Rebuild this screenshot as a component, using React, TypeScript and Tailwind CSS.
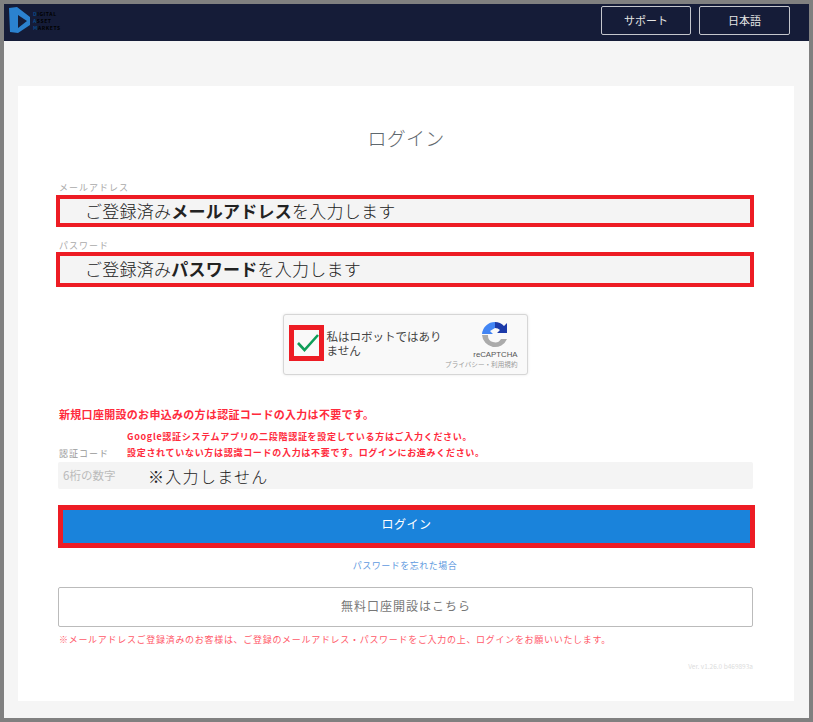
import type { ReactNode } from "react";

const jp = { fontFamily: '"Noto Sans CJK JP", "Noto Sans", sans-serif' };

function Logo() {
  return (
    <div className="flex items-center gap-[2px]">
      <svg width="22" height="27" viewBox="0 0 22 27">
        <path d="M0 1 L8 0 L21 10 L21 18 L9 26 L1 25 Z M9 8 L9 21 L18 14 Z" fill="#2b82d0" fillRule="evenodd" />
      </svg>
      <div className="flex flex-col text-[5px] font-bold leading-[7px] tracking-[0.6px] text-black">
        <span><span className="text-[#0a4a8a]">D</span>IGITAL</span>
        <span><span className="text-[#0a4a8a]">A</span>SSET</span>
        <span><span className="text-[#0a4a8a]">M</span>ARKETS</span>
      </div>
    </div>
  );
}

function Bar({ children }: { children: ReactNode }) {
  return (
    <div className="flex w-full items-center border-[4px] border-[#ed1c24] bg-[#f4f4f4] pb-[1px] pl-[25px] text-[17px] font-light tracking-[0.25px] text-[#222]">
      {children}
    </div>
  );
}

export default function App() {
  return (
    <div style={jp} className="flex h-[722px] w-[813px] flex-col border-4 border-[#808080] bg-[#f5f5f5]">
      <header className="flex h-[37px] shrink-0 items-start justify-between bg-[#151c38] pl-[5px] pr-[19px] pt-[3px]">
        <Logo />
        <div className="-mt-[1px] flex gap-2">
          <div className="flex h-[29px] w-[90px] items-center justify-center rounded-[2px] border border-[#c4c6cc] text-[11px] text-[#e4e4e4]">サポート</div>
          <div className="flex h-[29px] w-[91px] items-center justify-center rounded-[2px] border border-[#c4c6cc] text-[11px] text-[#e4e4e4]">日本語</div>
        </div>
      </header>
      <main className="ml-[14px] mr-[15px] mt-[45px] flex h-[615px] flex-col bg-white pl-[38px] pr-[40px]">
        <h1 className="mt-[37px] pl-[2px] text-center text-[19px] font-light leading-[30px] tracking-[0.2px] text-[#5f686e]">ログイン</h1>
        <div className="mt-[28px] pl-[3px] text-[9px] leading-[13px] tracking-[1px] text-[#aaa]">メールアドレス</div>
        <div className="mt-[1px] flex h-[32px]">
          <Bar><span>ご登録済み<b className="font-bold">メールアドレス</b>を入力します</span></Bar>
        </div>
        <div className="mt-[12px] pl-[3px] text-[9px] leading-[13px] tracking-[1px] text-[#aaa]">パスワード</div>
        <div className="flex h-[35px]">
          <Bar><span>ご登録済み<b className="font-bold">パスワード</b>を入力します</span></Bar>
        </div>

        <div className="mt-[27px] flex justify-center">
          <div className="flex h-[61px] w-[245px] rounded-[3px] border border-[#d6d6d6] bg-[#f9f9f9] shadow-[0_0_3px_rgba(0,0,0,0.1)]">
            <div className="ml-[5px] mt-[10px] flex h-[36px] w-[35px] shrink-0 items-center justify-center border-[5px] border-[#ed1c24] bg-[#f9f9f9] pl-[3px]">
              <svg width="22" height="18" viewBox="0 0 22 18" className="shrink-0">
                <path d="M1 9 L7.5 16 L21 1" fill="none" stroke="#0f9d58" strokeWidth="2.6" />
              </svg>
            </div>
            <div className="ml-[3px] mt-[14px] w-[116px] shrink-0 text-[11.5px] leading-[14px] text-[#444]">私はロボットではありません</div>
            <div className="flex flex-1 flex-col items-end pr-[9px]">
              <svg width="26" height="26" viewBox="0 0 26 26" className="mr-[10px] mt-[7px]">
                <path d="M13 0 A13 13 0 0 1 22 4 L25 1 L25 11 L15 11 L18 8 A7 7 0 0 0 13 6 Z" fill="#1c3aa9" />
                <path d="M0 12 A13 13 0 0 1 13 0 L13 6 L8 9 L11 12 Z" fill="#4285f4" />
                <path d="M0 13 L6 13 A7 7 0 0 0 19 17 L25 17 A13 13 0 0 1 0 13 Z" fill="#ababab" />
              </svg>
              <div className="mt-[2px] text-[7.8px] leading-[10px] text-[#555]" style={{ fontFamily: '"Liberation Sans", sans-serif' }}>reCAPTCHA</div>
              <div className="whitespace-nowrap text-[6.6px] leading-[9px] text-[#999]">プライバシー・利用規約</div>
            </div>
          </div>
        </div>

        <p className="mt-[31px] pl-[3px] text-[11px] font-bold leading-[16px] tracking-[0.3px] text-[#ff2a3c]">新規口座開設のお申込みの方は認証コードの入力は不要です。</p>
        <div className="mt-[7px] flex items-end pl-[3px]">
          <span className="w-[68px] shrink-0 pb-[1px] text-[9px] leading-[13px] tracking-[1px] text-[#999]">認証コード</span>
          <div className="whitespace-nowrap text-[9px] font-bold leading-[16px] tracking-[0.7px] text-[#ff2a3c]">
            <p>Google認証システムアプリの二段階認証を設定している方はご入力ください。</p>
            <p>設定されていない方は認識コードの入力は不要です。ログインにお進みください。</p>
          </div>
        </div>
        <div className="ml-[2px] mr-[1px] mt-[1px] flex h-[27px] items-center rounded-[2px] bg-[#f4f4f4] pl-[5px]">
          <span className="w-[85px] pt-[1px] text-[11.5px] text-[#bbb]">6桁の数字</span>
          <span className="text-[16px] font-light tracking-[1.3px] text-[#222]">※入力しません</span>
        </div>

        <div className="ml-[2px] mr-[-1px] mt-[16px] flex h-[43px] items-center justify-center border-[5px] border-[#ed1c24] bg-[#1a83db] pb-[5px] text-[12px] tracking-[0.5px] text-white">ログイン</div>
        <div className="mt-[11px] text-center text-[9px] leading-[13px] tracking-[0.5px] text-[#5f9ae0]">パスワードを忘れた場合</div>
        <div className="ml-[2px] mr-[1px] mt-[15px] flex h-[40px] items-center justify-center rounded-[2px] border border-[#bbb] pb-[2px] pl-[1px] text-[12px] tracking-[1px] text-[#777]">無料口座開設はこちら</div>
        <p className="mt-[6px] whitespace-nowrap pl-[3px] text-[9px] leading-[13px] tracking-[0.7px] text-[#ff5a6a]">※メールアドレスご登録済みのお客様は、ご登録のメールアドレス・パスワードをご入力の上、ログインをお願いいたします。</p>
        <div className="mt-[16px] pr-[1px] text-right text-[6.5px] leading-[9px] text-[#ddd]">Ver. v1.26.0 b469893a</div>
      </main>
    </div>
  );
}
